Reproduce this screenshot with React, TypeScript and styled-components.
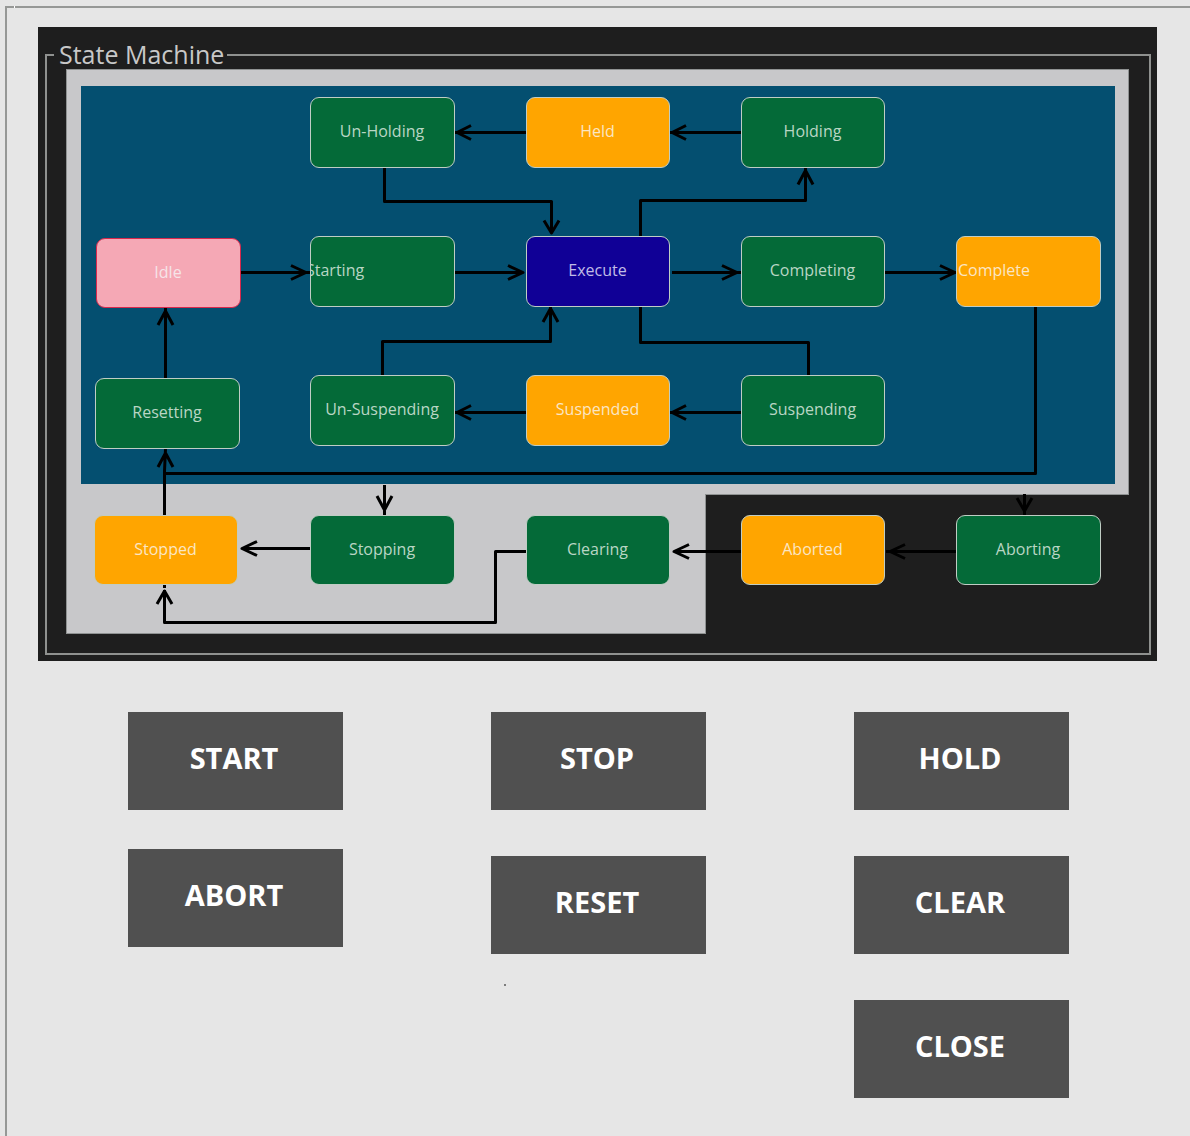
import React from "react";
import styled, { createGlobalStyle } from "styled-components";

const GlobalStyle = createGlobalStyle`
  *, *::before, *::after { box-sizing: border-box; }
  body {
    margin: 0;
    background: #e6e6e6;
    font-family: "Segoe UI", "Open Sans", "Noto Sans", sans-serif;
  }
`;

const Page = styled.main`
  padding: 6px 0 0 5px;
`;

const Frame = styled.div`
  position: relative;
  min-height: calc(100vh - 6px);
  padding: 19px 33px 38px 31px;
  border: solid #969896;
  border-width: 2px 0 0 2px;

  &::before {
    content: "";
    position: absolute;
    top: -2px;
    left: 7px;
    width: 1px;
    height: 2px;
    background: #fff;
  }
`;

const Panel = styled.section`
  padding: 14px 6px 6px 7px;
  background: #1e1e1e;
`;

const Group = styled.fieldset`
  min-width: 0;
  margin: 0;
  padding: 0 19px 19px;
  border: 2px solid #8f918f;
`;

const GroupTitle = styled.legend`
  margin-left: -12px;
  padding: 0 3px 2px 5px;
  color: #c8c8c8;
  font-size: 25px;
  line-height: 26px;
`;

const Canvas = styled.div`
  position: relative;
  width: 1063px;
  height: 565px;
`;

const Zone = styled.div<{ $x: number; $y: number; $w: number; $h: number }>`
  position: absolute;
  left: ${(p) => p.$x}px;
  top: ${(p) => p.$y}px;
  width: ${(p) => p.$w}px;
  height: ${(p) => p.$h}px;
`;

const OuterZone = styled(Zone)<{ $openTop?: boolean }>`
  background: #c8c8ca;
  border: 1px solid #8f9292;
  border-top-width: ${(p) => (p.$openTop ? 0 : 1)}px;
`;

const InnerZone = styled(Zone)`
  background: #044f70;
`;

const Wires = styled.svg`
  position: absolute;
  inset: 0;
  fill: none;
  stroke: #000;
  stroke-width: 3;
  stroke-linejoin: round;
`;

type Kind = "acting" | "waiting" | "execute" | "current";

const fills: Record<Kind, string> = {
  acting: "#046a38",
  waiting: "#ffa500",
  execute: "#100096",
  current: "#f5a8b5",
};

const inks: Record<Kind, string> = {
  acting: "#b9d6c4",
  waiting: "#fbe6c4",
  execute: "#c0bce6",
  current: "#f6e4e8",
};

const StateBox = styled.div<{
  $x: number;
  $y: number;
  $w: number;
  $h: number;
  $kind: Kind;
  $indent?: number;
}>`
  position: absolute;
  left: ${(p) => p.$x}px;
  top: ${(p) => p.$y}px;
  display: flex;
  align-items: center;
  justify-content: ${(p) => (p.$indent === undefined ? "center" : "flex-start")};
  width: ${(p) => p.$w}px;
  height: ${(p) => p.$h}px;
  padding: 0 1px 3px 0;
  overflow: hidden;
  border: 1px solid ${(p) => (p.$kind === "current" ? "#d8284c" : "#c0cdc4")};
  border-radius: 9px;
  background: ${(p) => fills[p.$kind]};
  color: ${(p) => inks[p.$kind]};
  font-size: 16px;
  line-height: 20px;
  text-indent: ${(p) => p.$indent ?? 0}px;
  white-space: nowrap;
`;

const Commands = styled.div`
  display: grid;
  grid-template-columns: repeat(3, 1fr);
  justify-items: center;
  align-items: start;
  padding: 51px 14px 0 16px;
`;

const CommandColumn = styled.div<{ $gap: number }>`
  position: relative;
  display: flex;
  flex-direction: column;
  gap: ${(p) => p.$gap}px;
`;

const CommandButton = styled.button`
  width: 215px;
  height: 98px;
  padding: 0 3px 6px 0;
  border: 0;
  background: #505050;
  color: #fff;
  font-family: inherit;
  font-size: 29px;
  font-weight: 700;
  line-height: 40px;
  cursor: pointer;
`;

const Marker = styled.span`
  position: absolute;
  top: calc(100% + 30px);
  left: 13px;
  width: 2px;
  height: 2px;
  background: #7c7c7c;
`;

interface StateNode {
  name: string;
  x: number;
  y: number;
  w: number;
  h: number;
  kind: Kind;
  indent?: number;
}

const states: StateNode[] = [
  { name: "Un-Holding", x: 244, y: 28, w: 145, h: 71, kind: "acting" },
  { name: "Held", x: 460, y: 28, w: 144, h: 71, kind: "waiting" },
  { name: "Holding", x: 675, y: 28, w: 144, h: 71, kind: "acting" },
  { name: "Idle", x: 30, y: 169, w: 145, h: 70, kind: "current" },
  { name: "Starting", x: 244, y: 167, w: 145, h: 71, kind: "acting", indent: -5 },
  { name: "Execute", x: 460, y: 167, w: 144, h: 71, kind: "execute" },
  { name: "Completing", x: 675, y: 167, w: 144, h: 71, kind: "acting" },
  { name: "Complete", x: 890, y: 167, w: 145, h: 71, kind: "waiting", indent: 1 },
  { name: "Resetting", x: 29, y: 309, w: 145, h: 71, kind: "acting" },
  { name: "Un-Suspending", x: 244, y: 306, w: 145, h: 71, kind: "acting" },
  { name: "Suspended", x: 460, y: 306, w: 144, h: 71, kind: "waiting" },
  { name: "Suspending", x: 675, y: 306, w: 144, h: 71, kind: "acting" },
  { name: "Stopped", x: 28, y: 446, w: 144, h: 70, kind: "waiting" },
  { name: "Stopping", x: 244, y: 446, w: 145, h: 70, kind: "acting" },
  { name: "Clearing", x: 460, y: 446, w: 144, h: 70, kind: "acting" },
  { name: "Aborted", x: 675, y: 446, w: 144, h: 70, kind: "waiting" },
  { name: "Aborting", x: 890, y: 446, w: 145, h: 70, kind: "acting" },
];

const wires = [
  // top row
  "M460 63.5H389 M405 56.500L391 63.5L405 70.500",
  "M675 63.5H604 M620 56.500L606 63.5L620 70.500",
  "M318.500 99V132.500H485.500V163 M478 151.500L485.500 164L493 151.500",
  "M574.500 167V131.500H739.500V99 M732 115.500L739.500 101.500L747 115.500",
  // middle row
  "M175 203.500H244 M225 196.500L240 203.500L225 210.500",
  "M389 203.500H457 M442 196.500L457 203.500L442 210.500",
  "M606 203.500H675 M656 196.500L671 203.500L656 210.500",
  "M819 203.500H890 M874 196.500L889 203.500L874 210.500",
  "M316.500 306V272.500H484.500V238 M477 253L484.500 239.500L492 253",
  "M574.500 238V273.500H742.500V306",
  // lower row
  "M460 343.500H389 M405 336.500L391 343.500L405 350.500",
  "M675 343.500H604 M620 336.500L606 343.500L620 350.500",
  "M99.500 309V239 M92 256L99.500 242L107 256",
  "M969.500 238V404.500H99",
  "M98.500 446V402L99.500 380 M92 398L99.500 384L107 398",
  // bottom row
  "M318.500 416V446 M311 427L318.500 441L326 427",
  "M244 479.500H176 M191 472.500L176 479.500L191 486.500",
  "M460 482.500H429.500V553.500H98.500V521 M98.500 516V519 M91 535L98.500 522L106 535",
  "M675 482.500H608 M623 475.500L608 482.500L623 489.500",
  "M890 482.500H820 M839 475.500L824 482.500L839 489.500",
  "M958.500 425V446 M951 429L958.500 442L966 429",
];

const columns = [
  { gap: 39, commands: ["START", "ABORT"] },
  { gap: 46, commands: ["STOP", "RESET"], marker: true },
  { gap: 46, commands: ["HOLD", "CLEAR", "CLOSE"] },
];

export default function App() {
  return (
    <>
      <GlobalStyle />
      <Page>
        <Frame>
          <Panel>
            <Group>
              <GroupTitle>State Machine</GroupTitle>
              <Canvas>
                <OuterZone $x={0} $y={0} $w={1063} $h={426} />
                <OuterZone $x={0} $y={425} $w={640} $h={140} $openTop />
                <InnerZone $x={15} $y={17} $w={1034} $h={398} />
                <Wires width="1063" height="565" viewBox="0 0 1063 565" aria-hidden="true">
                  {wires.map((d) => (
                    <path key={d} d={d} />
                  ))}
                </Wires>
                {states.map((s) => (
                  <StateBox
                    key={s.name}
                    $x={s.x}
                    $y={s.y}
                    $w={s.w}
                    $h={s.h}
                    $kind={s.kind}
                    $indent={s.indent}
                  >
                    {s.name}
                  </StateBox>
                ))}
              </Canvas>
            </Group>
          </Panel>
          <Commands>
            {columns.map((column) => (
              <CommandColumn key={column.commands[0]} $gap={column.gap}>
                {column.commands.map((name) => (
                  <CommandButton key={name} type="button">
                    {name}
                  </CommandButton>
                ))}
                {column.marker && <Marker />}
              </CommandColumn>
            ))}
          </Commands>
        </Frame>
      </Page>
    </>
  );
}
